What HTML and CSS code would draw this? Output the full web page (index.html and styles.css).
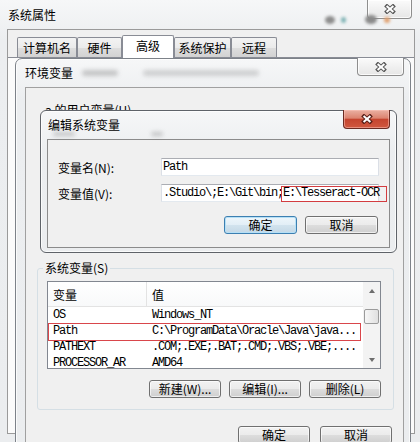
FILE: index.html
```html
<!DOCTYPE html>
<html lang="zh-CN">
<head>
<meta charset="utf-8">
<title>系统属性</title>
<link rel="stylesheet" href="styles.css">
</head>
<body>
<div class="desktop">
  <div class="win win-outer">
    <div class="titlebar tb-outer">
      <span class="title">系统属性</span>
      <span class="close close-inactive close-outer">
        <svg width="12" height="10" viewBox="0 0 12 10"><path d="M1.5 1 L10.5 9 M10.5 1 L1.5 9" stroke="#5a5a5a" stroke-width="4"/><path d="M2.6 2 L9.4 8 M9.4 2 L2.6 8" stroke="#fff" stroke-width="2"/></svg>
      </span>
    </div>
    <div class="client client-outer">
      <div class="tabs">
        <div class="tab tab-a">计算机名</div>
        <div class="tab tab-b">硬件</div>
        <div class="tab tab-c tab-sel">高级</div>
        <div class="tab tab-d">系统保护</div>
        <div class="tab tab-e">远程</div>
      </div>
      <div class="tabpage"></div>
    </div>
  </div>

  <span class="glare g1"></span>
  <span class="glare g2"></span>
  <span class="glare g3"></span>
  <span class="glare g4"></span>

  <div class="win win-env">
    <div class="titlebar tb-env">
      <span class="title">环境变量</span>
      <span class="smudge s1"></span>
      <span class="smudge s2"></span>
      <span class="close close-inactive close-env">
        <svg width="12" height="10" viewBox="0 0 12 10"><path d="M1.5 1 L10.5 9 M10.5 1 L1.5 9" stroke="#5a5a5a" stroke-width="4"/><path d="M2.6 2 L9.4 8 M9.4 2 L2.6 8" stroke="#fff" stroke-width="2"/></svg>
      </span>
    </div>
    <div class="client client-env">
      <div class="uservars">a 的用户变量(U)</div>
      <fieldset class="group">
        <legend>系统变量(S)</legend>
        <div class="listview">
          <div class="lv-main">
            <div class="lv-head"><span class="col1">变量</span><span class="col2">值</span></div>
            <div class="lv-row"><span class="col1">OS</span><span class="col2">Windows_NT</span></div>
            <div class="lv-row lv-row-mark"><span class="col1">Path</span><span class="col2">C:\ProgramData\Oracle\Java\java...</span></div>
            <div class="lv-row"><span class="col1">PATHEXT</span><span class="col2">.COM;.EXE;.BAT;.CMD;.VBS;.VBE;....</span></div>
            <div class="lv-row"><span class="col1">PROCESSOR_AR</span><span class="col2">AMD64</span></div>
          </div>
          <div class="vscroll">
            <div class="sb-btn"><span class="arrow-up"></span></div>
            <div class="sb-track"><div class="thumb"></div></div>
            <div class="sb-btn"><span class="arrow-down"></span></div>
          </div>
        </div>
        <div class="btnrow group-btns">
          <button class="btn">新建(W)...</button>
          <button class="btn">编辑(I)...</button>
          <button class="btn">删除(L)</button>
        </div>
      </fieldset>
      <div class="btnrow dialog-btns">
        <button class="btn">确定</button>
        <button class="btn">取消</button>
      </div>
    </div>
  </div>

  <div class="win win-edit">
    <div class="titlebar tb-edit">
      <span class="title">编辑系统变量</span>
      <span class="close close-red">
        <svg width="12" height="10" viewBox="0 0 12 10"><path d="M1.5 1 L10.5 9 M10.5 1 L1.5 9" stroke="#5b2019" stroke-width="4"/><path d="M2.6 2 L9.4 8 M9.4 2 L2.6 8" stroke="#fff" stroke-width="2"/></svg>
      </span>
    </div>
    <span class="smudge s3"></span>
    <span class="smudge s4"></span>
    <div class="client client-edit">
      <div class="frow">
        <span class="flabel">变量名(N):</span>
        <div class="field">Path</div>
      </div>
      <div class="frow">
        <span class="flabel">变量值(V):</span>
        <div class="field">.Studio\;E:\Git\bin;E:\Tesseract-OCR<span class="mark"></span></div>
      </div>
      <div class="btnrow edit-btns">
        <button class="btn btn-default">确定</button>
        <button class="btn">取消</button>
      </div>
    </div>
  </div>
</div>
</body>
</html>
```

FILE: styles.css
```css
* { box-sizing: border-box; }

body {
  margin: 0;
  background: #ececec;
  font-family: "Noto Sans CJK SC", "Noto Sans", sans-serif;
  font-size: 12px;
  color: #000;
}

.desktop {
  position: relative;
  width: 420px;
  height: 442px;
  overflow: hidden;
}

.win {
  background: linear-gradient(#f6f7f8, #eceef0 40px, #ebedef);
}

.titlebar {
  display: flex;
  align-items: center;
  flex: none;
}

.title {
  line-height: 14px;
  white-space: nowrap;
}

.close {
  margin-left: auto;
  align-self: flex-start;
  display: flex;
  align-items: center;
  justify-content: center;
}

.close-inactive {
  border: 1px solid #8e8e8e;
  border-top: none;
  border-radius: 0 0 4px 4px;
  background: linear-gradient(#fbfbfb, #e6e6e6);
  box-shadow: inset 0 0 0 1px rgba(255, 255, 255, 0.8);
}

/* outer window */
.win-outer {
  width: 420px;
  height: 442px;
  display: flex;
  flex-direction: column;
}

.tb-outer {
  height: 29px;
  padding-left: 8px;
}

.close-outer {
  width: 45px;
  height: 19px;
  margin-right: 8px;
}

.client-outer {
  margin-left: 7px;
  width: 408px;
  height: 405px;
  border: 1px solid #9a9a9a;
  background: #f0f0f0;
  display: flex;
  flex-direction: column;
}

.tabs {
  display: flex;
  align-items: flex-end;
  height: 27px;
  padding: 5px 0 0 9px;
  flex: none;
}

.tab {
  height: 20px;
  border: 1px solid #898c95;
  border-bottom: none;
  border-radius: 2px 2px 0 0;
  background: linear-gradient(#f3f3f3, #ebebeb 50%, #dedede 51%, #d2d2d2);
  text-align: center;
  padding-top: 1px;
  line-height: 17px;
  white-space: nowrap;
}

.tab-a { width: 60px; }
.tab-b { width: 45px; }
.tab-c { width: 52px; }
.tab-d { width: 57px; }
.tab-e { width: 46px; }

.tab-sel {
  height: 23px;
  margin-bottom: -1px;
  padding-top: 0;
  line-height: 20px;
  background: #fff;
  position: relative;
  z-index: 1;
}

.tabpage {
  flex: 1;
  border-top: 1px solid #898c95;
  background: #fbfbfb;
}

/* blurred glass reflections */
.glare {
  position: absolute;
  border-radius: 50%;
  filter: blur(1.5px);
}
.g1 { left: 325px; top: 16px; width: 10px; height: 8px; background: #8d8d8d; }
.g2 { left: 341px; top: 17px; width: 5px; height: 6px; background: #7fb3b5; }
.g3 { left: 365px; top: 15px; width: 12px; height: 9px; background: #8a8a8a; }
.g4 { left: 384px; top: 17px; width: 6px; height: 6px; background: #e0a070; }

.smudge {
  display: block;
  height: 6px;
  border-radius: 3px;
  background: rgba(90, 90, 90, 0.3);
  filter: blur(2px);
  flex: none;
}
.s1 { width: 36px; margin-left: 9px; }
.s2 { width: 116px; margin-left: 25px; background: rgba(100, 100, 100, 0.25); }
.s3, .s4 { position: absolute; top: 21px; height: 4px; background: rgba(90, 90, 90, 0.3); }
.s3 { left: 12px; width: 22px; }
.s4 { left: 110px; width: 12px; }

/* environment variables window */
.win-env {
  position: absolute;
  left: 15px;
  top: 58px;
  width: 396px;
  height: 400px;
  border: 1px solid #7d8289;
  border-radius: 7px 7px 0 0;
  display: flex;
  flex-direction: column;
  box-shadow: inset 0 0 0 1px rgba(255, 255, 255, 0.75);
}

.tb-env {
  height: 28px;
  padding-left: 9px;
}

.close-env {
  width: 47px;
  height: 18px;
  margin-right: 6px;
  margin-top: -1px;
}

.client-env {
  flex: 1;
  margin: 0 6px 0 9px;
  border: 1px solid #a0a0a0;
  background: #f0f0f0;
}

.uservars {
  height: 173px;
  padding: 15px 0 0 19px;
  line-height: 14px;
}

.group {
  margin: 0 9px 0 11px;
  border: 1px solid #d5dfe5;
  border-radius: 3px;
  padding: 6px 12px 11px 9px;
  min-width: 0;
}

.group legend {
  padding: 0 2px;
  margin-left: -4px;
  line-height: 14px;
}

.listview {
  display: flex;
  height: 88px;
  border: 1px solid #828790;
  background: #fff;
}

.lv-main {
  flex: 1;
  min-width: 0;
  overflow: hidden;
}

.lv-head {
  display: flex;
  height: 25px;
  border-bottom: 1px solid #e3e3e3;
  background: linear-gradient(#ffffff, #f8f9fa);
}

.lv-head span {
  display: flex;
  align-items: center;
}

.col1 {
  width: 99px;
  flex: none;
  padding-left: 5px;
}

.lv-head .col1 {
  border-right: 1px solid #e3e3e3;
}

.col2 {
  padding-left: 5px;
  white-space: nowrap;
}

.lv-row {
  display: flex;
  height: 16px;
  line-height: 16px;
  font-family: "Liberation Mono", monospace;
  font-size: 12px;
  letter-spacing: -1.2px;
  white-space: nowrap;
}

.lv-row-mark {
  position: relative;
}

.lv-row-mark::after {
  content: "";
  position: absolute;
  left: 0;
  right: 2px;
  top: 0;
  bottom: -2px;
  border: 1px solid #d9464b;
}

.vscroll {
  width: 17px;
  flex: none;
  display: flex;
  flex-direction: column;
  background: #f3f3f3;
}

.sb-btn {
  height: 17px;
  display: flex;
  align-items: center;
  justify-content: center;
}

.arrow-up, .arrow-down {
  width: 0;
  height: 0;
  border-left: 3.5px solid transparent;
  border-right: 3.5px solid transparent;
}
.arrow-up { border-bottom: 4px solid #6d6d6d; }
.arrow-down { border-top: 4px solid #6d6d6d; }

.sb-track {
  flex: 1;
  padding: 10px 1px 0;
}

.thumb {
  height: 15px;
  border: 1px solid #9b9b9b;
  border-radius: 2px;
  background: linear-gradient(90deg, #f7f7f7, #e0e0e0);
}

.btnrow {
  display: flex;
  justify-content: flex-end;
}

.group-btns {
  margin-top: 11px;
  gap: 8px;
}

.dialog-btns {
  margin: 16px 11px 0 0;
  gap: 10px;
}

.btn {
  width: 72px;
  height: 18px;
  padding: 0;
  border: 1px solid #707070;
  border-radius: 3px;
  background: linear-gradient(#f2f2f2, #ebebeb 50%, #dddddd 51%, #cfcfcf);
  box-shadow: inset 0 0 0 1px rgba(255, 255, 255, 0.65);
  font-family: "Noto Sans CJK SC", "Noto Sans", sans-serif;
  font-size: 12px;
  line-height: 16px;
  color: #000;
  text-align: center;
  white-space: nowrap;
}

.btn-default {
  border-color: #3c7fb1;
  background: linear-gradient(#eef6fb, #e2eef6 50%, #d2e3ee 51%, #c4d8e6);
  box-shadow: inset 0 0 0 1px #b6e0f6;
}

/* edit dialog */
.win-edit {
  position: absolute;
  left: 40px;
  top: 110px;
  width: 357px;
  height: 143px;
  border: 1px solid #5f6369;
  border-radius: 6px;
  display: flex;
  flex-direction: column;
  box-shadow: inset 0 0 0 1px rgba(255, 255, 255, 0.75);
}

.tb-edit {
  height: 28px;
  padding-left: 7px;
}

.close-red {
  width: 47px;
  height: 19px;
  margin-right: 6px;
  margin-top: -1px;
  border: 1px solid #6a2b22;
  border-top: none;
  border-radius: 0 0 4px 4px;
  background: linear-gradient(#eab0a2, #dc8470 45%, #c5452f 52%, #d0583f);
  box-shadow: inset 0 0 0 1px rgba(255, 200, 190, 0.5);
}

.client-edit {
  height: 109px;
  margin: 0 6px;
  border: 1px solid #8b8b8b;
  background: #f0f0f0;
  padding: 18px 10px 0 10px;
}

.frow {
  display: flex;
  align-items: center;
  height: 18px;
}

.frow + .frow {
  margin-top: 8px;
}

.flabel {
  width: 103px;
  flex: none;
  white-space: nowrap;
}

.field {
  position: relative;
  width: 218px;
  height: 18px;
  border: 1px solid #dbdfe6;
  border-top-color: #abadb3;
  border-bottom-color: #e3e9ef;
  background: #fff;
  padding-left: 1px;
  font-family: "Liberation Mono", monospace;
  font-size: 12px;
  letter-spacing: -1.2px;
  line-height: 16px;
  white-space: nowrap;
}

.mark {
  position: absolute;
  left: 119px;
  top: 1px;
  width: 106px;
  height: 16px;
  border: 1px solid #d33c40;
}

.edit-btns {
  margin: 14px 1px 0 0;
  gap: 8px;
}

.edit-btns .btn {
  width: 73px;
}
```
